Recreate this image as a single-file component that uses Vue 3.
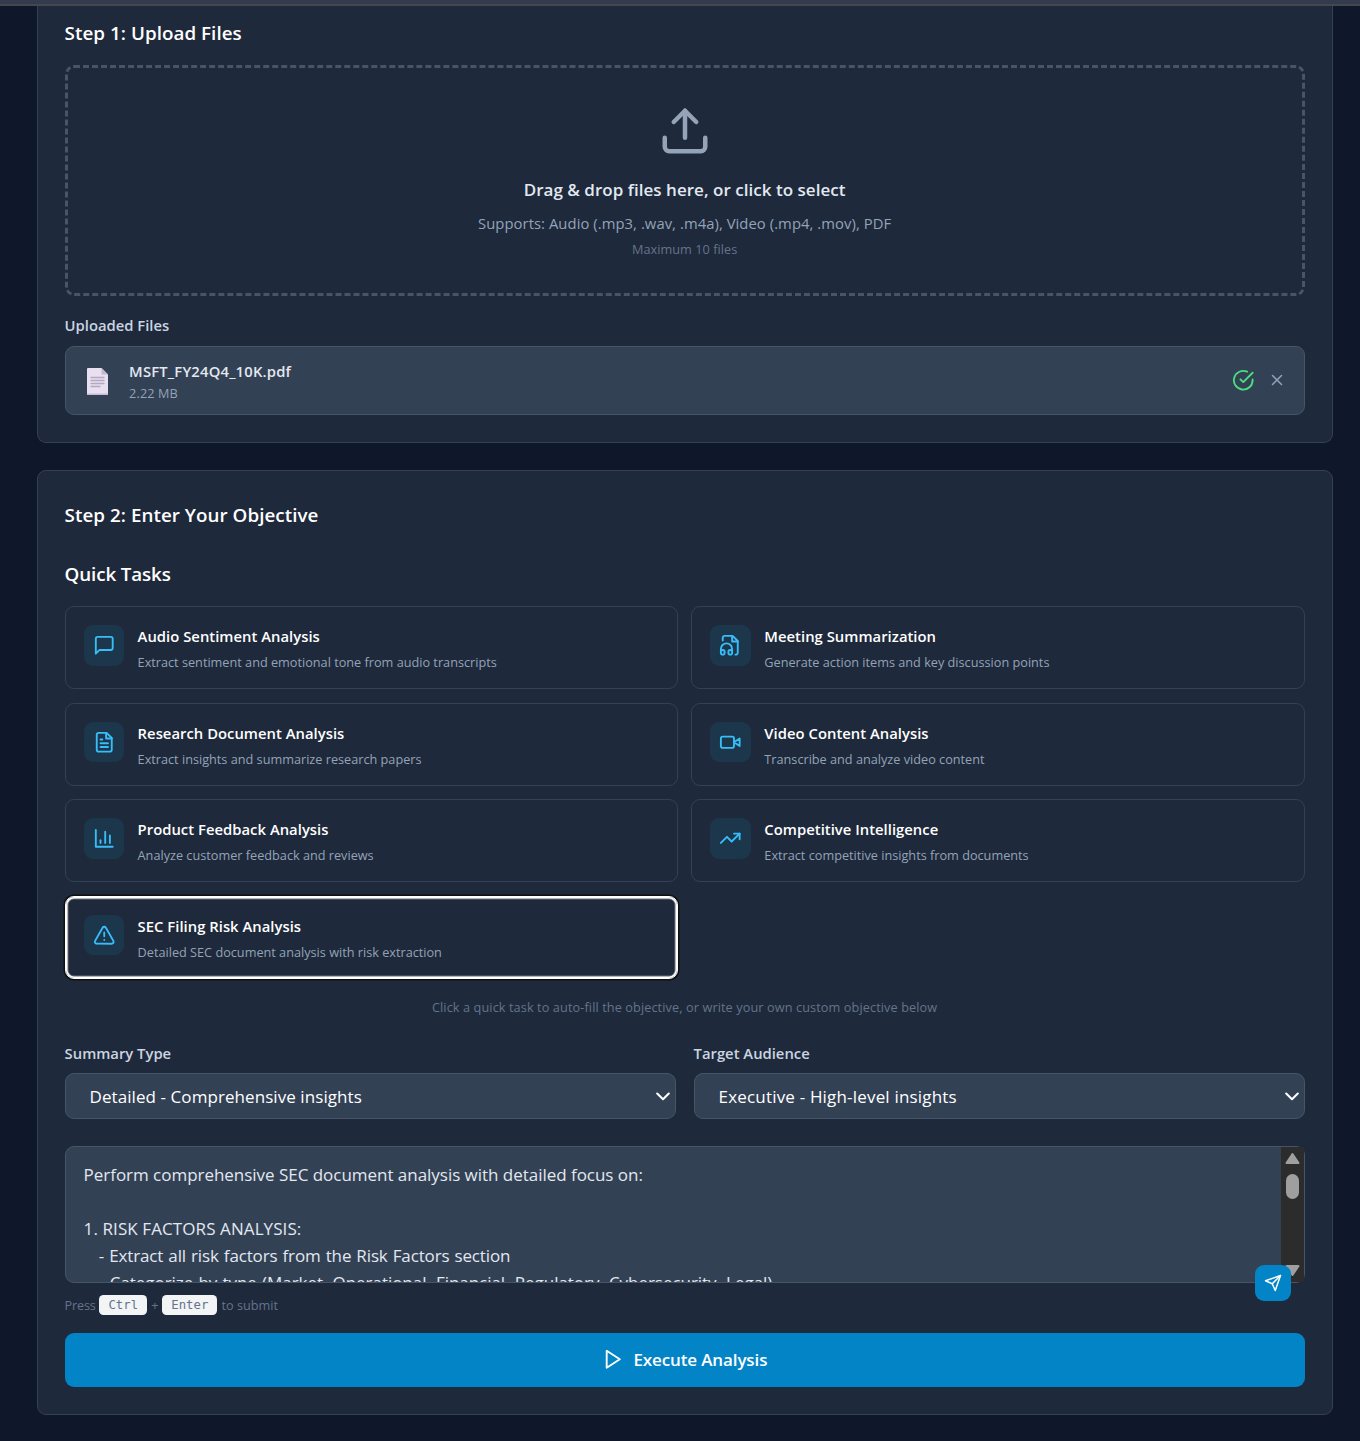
<script setup>
const tasks = [
  { icon: 'message', title: 'Audio Sentiment Analysis', text: 'Extract sentiment and emotional tone from audio transcripts' },
  { icon: 'audio', title: 'Meeting Summarization', text: 'Generate action items and key discussion points' },
  { icon: 'file', title: 'Research Document Analysis', text: 'Extract insights and summarize research papers' },
  { icon: 'video', title: 'Video Content Analysis', text: 'Transcribe and analyze video content' },
  { icon: 'chart', title: 'Product Feedback Analysis', text: 'Analyze customer feedback and reviews' },
  { icon: 'trend', title: 'Competitive Intelligence', text: 'Extract competitive insights from documents' },
  { icon: 'alert', title: 'SEC Filing Risk Analysis', text: 'Detailed SEC document analysis with risk extraction', focused: true },
]

const icons = {
  message: ['M21 15a2 2 0 0 1-2 2H7l-4 4V5a2 2 0 0 1 2-2h14a2 2 0 0 1 2 2z'],
  audio: ['M17.5 22h.5c.5 0 1-.2 1.4-.6.4-.4.6-.9.6-1.4V7.500L14.500 2H6c-.5 0-1 .2-1.400.6C4.200 3 4 3.500 4 4v3', 'M14 2v6h6', 'M2 19a2 2 0 1 1 4 0v1a2 2 0 1 1-4 0v-4a6 6 0 0 1 12 0v4a2 2 0 1 1-4 0v-1a2 2 0 1 1 4 0'],
  file: ['M14.5 2H6a2 2 0 0 0-2 2v16a2 2 0 0 0 2 2h12a2 2 0 0 0 2-2V7.5z', 'M14 2v6h6', 'M16 13H8', 'M16 17H8', 'M10 9H8'],
  video: ['m22 8-6 4 6 4V8z', 'M4 6h10a2 2 0 0 1 2 2v8a2 2 0 0 1-2 2H4a2 2 0 0 1-2-2V8a2 2 0 0 1 2-2z'],
  chart: ['M3 3v18h18', 'M18 17V9', 'M13 17V5', 'M8 17v-3'],
  trend: ['m22 7-8.5 8.5-5-5L2 17', 'M16 7h6v6'],
  alert: ['m21.73 18-8-14a2 2 0 0 0-3.48 0l-8 14A2 2 0 0 0 4 21h16a2 2 0 0 0 1.73-3z', 'M12 9v4', 'M12 17h.01'],
}

const objective = [
  'Perform comprehensive SEC document analysis with detailed focus on:',
  '',
  '1. RISK FACTORS ANALYSIS:',
  '   - Extract all risk factors from the Risk Factors section',
  '   - Categorize by type (Market, Operational, Financial, Regulatory, Cybersecurity, Legal)',
]
</script>

<template>
  <div class="page">
    <div class="topbar"></div>
    <main>
      <section class="card upload-card">
        <h2>Step 1: Upload Files</h2>
        <div class="dropzone">
          <svg class="upload-icon" viewBox="0 0 24 24"><path d="M21 15v4a2 2 0 0 1-2 2H5a2 2 0 0 1-2-2v-4" /><path d="m17 8-5-5-5 5" /><path d="M12 3v12" /></svg>
          <p class="drop-title">Drag &amp; drop files here, or click to select</p>
          <p class="drop-types">Supports: Audio (.mp3, .wav, .m4a), Video (.mp4, .mov), PDF</p>
          <p class="drop-max">Maximum 10 files</p>
        </div>
        <h4>Uploaded Files</h4>
        <div class="file">
          <svg class="doc" viewBox="0 0 21 27">
            <path d="M1 0h13.5L21 6.5V26a1 1 0 0 1-1 1H1a1 1 0 0 1-1-1V1a1 1 0 0 1 1-1z" fill="#e8dff0" />
            <path d="M14.5 0v6.500H21z" fill="#c3b8cd" />
            <path d="M0 26.500h21" stroke="#c9bcd6" />
            <path d="M4 9.500h13M4 12.500h13M4 15.500h13M4 18.500h9" stroke="#b5a9c0" stroke-width="1.300" />
          </svg>
          <div class="file-info">
            <p class="file-name">MSFT_FY24Q4_10K.pdf</p>
            <p class="file-size">2.22 MB</p>
          </div>
          <svg class="check" viewBox="0 0 24 24"><path d="M22 11.080V12a10 10 0 1 1-5.930-9.140" /><path d="m9 11 3 3L22 4" /></svg>
          <svg class="close" viewBox="0 0 24 24"><path d="M18 6 6 18M6 6l12 12" /></svg>
        </div>
      </section>

      <section class="card">
        <h2 class="objective-title">Step 2: Enter Your Objective</h2>
        <h3>Quick Tasks</h3>
        <div class="tasks">
          <button v-for="t in tasks" :key="t.title" class="task" :class="{ focused: t.focused }">
            <span class="task-icon"><svg viewBox="0 0 24 24"><path v-for="d in icons[t.icon]" :key="d" :d="d" /></svg></span>
            <span class="task-body">
              <span class="task-title">{{ t.title }}</span>
              <span class="task-text">{{ t.text }}</span>
            </span>
          </button>
        </div>
        <p class="hint">Click a quick task to auto-fill the objective, or write your own custom objective below</p>

        <div class="fields">
          <div class="field">
            <label>Summary Type</label>
            <div class="select"><span class="summary-value">Detailed - Comprehensive insights</span><svg viewBox="0 0 14 9"><path d="m1.200 1.500 5.800 5.800 5.800-5.800" /></svg></div>
          </div>
          <div class="field">
            <label>Target Audience</label>
            <div class="select"><span class="audience-value">Executive - High-level insights</span><svg viewBox="0 0 14 9"><path d="m1.200 1.500 5.800 5.800 5.800-5.800" /></svg></div>
          </div>
        </div>

        <div class="editor">
          <div class="editor-text"><div v-for="(line, i) in objective" :key="i" class="line">{{ line }}</div></div>
          <div class="scrollbar">
            <svg viewBox="0 0 14 11"><path d="M7 1 13 10H1z" /></svg>
            <span class="thumb"></span>
            <svg class="down" viewBox="0 0 14 11"><path d="M7 10 13 1H1z" /></svg>
          </div>
          <button class="send"><svg viewBox="0 0 24 24"><path d="m22 2-7 20-4-9-9-4z" /><path d="M22 2 11 13" /></svg></button>
        </div>
        <p class="shortcut"><span class="press">Press</span><kbd>Ctrl</kbd><span>+</span><kbd>Enter</kbd><span>to submit</span></p>
        <button class="execute"><svg viewBox="0 0 24 24"><path d="m5 3 14 9-14 9z" /></svg><span>Execute Analysis</span></button>
      </section>
    </main>
  </div>
</template>

<style>
body { background: #0f172a; }
</style>

<style scoped>
* { box-sizing: border-box; }
.page {
  width: 1360px; height: 1441px; overflow: hidden; background: #0f172a;
  font-family: "Open Sans", "Noto Sans", sans-serif; color: #fff;
}
.topbar { height: 6px; background: #343b4f; border-bottom: 2px solid #454750; }
main { display: flex; flex-direction: column; gap: 27px; padding-left: 36.600px; width: 1360px; }
h2, h3, h4, p { margin: 0; white-space: nowrap; }
svg { display: block; flex: none; fill: none; stroke: currentColor; stroke-width: 2; stroke-linecap: round; stroke-linejoin: round; }
button { font: inherit; color: inherit; }
.card { width: 1296px; background: #1e293b; border: 1px solid #334155; border-radius: 9px; padding: 27px; }
.upload-card { height: 437px; border-top: 0; border-radius: 0 0 9px 9px; padding-top: 11px; }
h2, h3 { font-size: 18.800px; line-height: 32px; font-weight: 600; letter-spacing: 0.050px; }
.dropzone {
  margin-top: 16px; height: 231px; border: 3px dashed #475569; border-radius: 9px; padding-top: 36px;
  display: flex; flex-direction: column; align-items: center;
}
.upload-icon { width: 54px; height: 54px; color: #94a3b8; }
.drop-title { margin-top: 18px; font-size: 17px; line-height: 27px; font-weight: 600; letter-spacing: 0.030px; color: #e2e8f0; }
.drop-types { margin-top: 9px; font-size: 14.800px; line-height: 22.500px; letter-spacing: 0.065px; color: #94a3b8; }
.drop-max { margin-top: 5.500px; font-size: 12.700px; line-height: 18px; letter-spacing: 0.050px; color: #64748b; }
h4, label { display: block; font-size: 14.800px; line-height: 22px; font-weight: 600; color: #cbd5e1; }
h4 { margin-top: 18px; }
.file {
  margin-top: 10px; height: 69px; padding: 0 18px 0 21px; display: flex; align-items: center;
  background: #334155; border: 1px solid #475569; border-radius: 9px;
}
.doc { width: 21px; height: 27px; margin-top: 1px; stroke: none; }
.file-info { flex: 1; margin-left: 21.500px; padding-top: 1.500px; }
.file-name { font-size: 14.800px; line-height: 22.500px; font-weight: 600; letter-spacing: 0.190px; color: #e2e8f0; }
.file-size { font-size: 12.700px; line-height: 20px; letter-spacing: 0.100px; color: #94a3b8; }
.check { width: 22.500px; height: 22.500px; color: #4ade80; }
.close { width: 18px; height: 18px; margin: -1px 0 0 13.500px; color: #94a3b8; }

.objective-title { margin-top: 1px; }
h3 { margin-top: 27px; letter-spacing: -0.120px; }
.tasks { margin-top: 16px; display: grid; grid-template-columns: 1fr 1fr; gap: 13.500px; }
.task {
  height: 83.130px; padding: 18px; display: flex; align-items: flex-start; gap: 13.500px; text-align: left;
  background: transparent; border: 1px solid #334155; border-radius: 9px;
}
.task.focused { border-color: #fff; box-shadow: 0 0 0 1.500px #101010, inset 0 0 0 1.500px #fff, inset 0 0 0 2.500px #686f78; }
.task-icon { width: 40.500px; height: 40.500px; flex: none; padding: 9px; border-radius: 9px; background: #1c364c; color: #38bdf8; }
.task-icon svg { width: 22.500px; height: 22.500px; }
.task-body { display: flex; flex-direction: column; gap: 5.500px; white-space: nowrap; }
.task-title { font-size: 14.800px; line-height: 22.500px; font-weight: 600; letter-spacing: 0.030px; }
.task-text { font-size: 12.700px; line-height: 18px; color: #94a3b8; }
.hint { margin-top: 18px; text-align: center; font-size: 12.700px; line-height: 20px; letter-spacing: 0.105px; color: #64748b; }
.fields { margin-top: 25px; display: grid; grid-template-columns: 1fr 1fr; gap: 18px; }
.select {
  margin-top: 9px; height: 46px; padding: 0 5px 0 24px; display: flex; align-items: center; justify-content: space-between;
  font-size: 17px; background: #334155; border: 1px solid #475569; border-radius: 9px;
}
.select svg { width: 14px; height: 9px; }
.summary-value { letter-spacing: 0.070px; }
.audience-value { letter-spacing: 0.180px; }
.editor {
  position: relative; margin-top: 27px; height: 137px; display: flex;
  background: #334155; border: 1px solid #475569; border-radius: 9px;
}
.editor-text { flex: 1; padding: 14px 18px 0; overflow: hidden; white-space: pre; font-size: 17px; line-height: 27px; color: #e2e8f0; }
.line { height: 27px; letter-spacing: -0.030px; }
.line:nth-child(3) { letter-spacing: 0.090px; }
.line:nth-child(4) { letter-spacing: -0.140px; word-spacing: 0.800px; }
.line:nth-child(5) { letter-spacing: -0.040px; word-spacing: 0.800px; }
.scrollbar {
  width: 23px; background: #2c2c2c; padding: 6px 0;
  display: flex; flex-direction: column; align-items: center;
}
.scrollbar svg { width: 15px; height: 11px; fill: #9f9f9f; stroke: #9f9f9f; }
.scrollbar .down { margin-top: auto; }
.thumb { width: 13px; height: 25px; margin-top: 10px; border-radius: 7px; background: #9f9f9f; }
.send {
  position: absolute; right: 13px; bottom: -19px; width: 36px; height: 36px; padding: 9px;
  border: 0; border-radius: 9px; background: #0284c7;
}
.send svg { width: 18px; height: 18px; }
.shortcut { margin-top: 12px; height: 20px; display: flex; align-items: center; font-size: 12.700px; line-height: 20px; color: #64748b; }
.press { letter-spacing: -0.200px; }
kbd { margin: 0 4.200px 0 3.800px; padding: 0 9px; border-radius: 4.500px; background: #f3f4f6; font: 12.300px/20px "DejaVu Sans Mono", monospace; }
.execute {
  margin-top: 18px; width: 100%; height: 54px; padding-bottom: 3px; display: flex; align-items: center; justify-content: center; gap: 9px;
  border: 0; border-radius: 9px; background: #0284c7; font-size: 17px; font-weight: 600; letter-spacing: -0.120px;
}
.execute svg { width: 22.500px; height: 22.500px; }
</style>
